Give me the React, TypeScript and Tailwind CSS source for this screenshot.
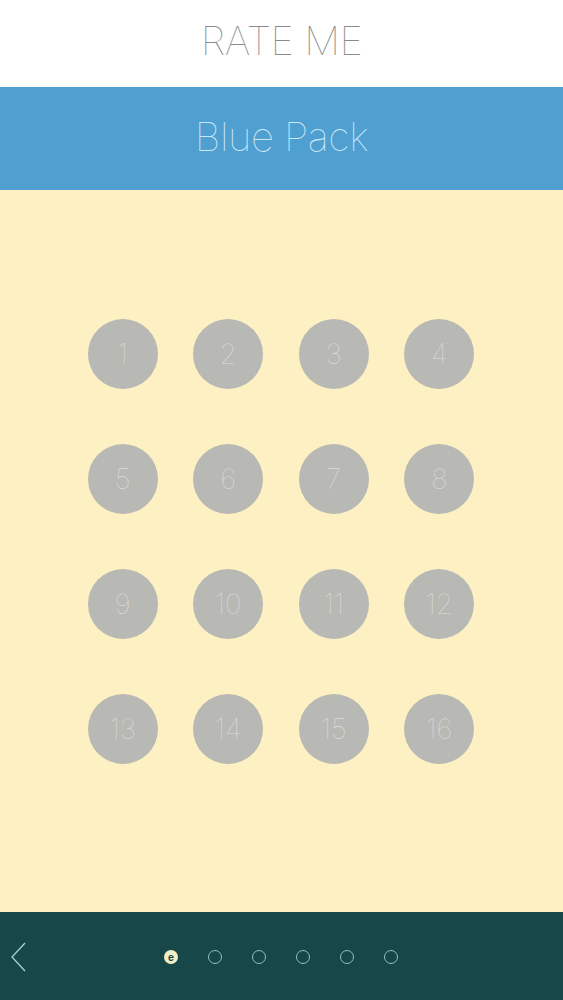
import React from 'react';

const levels = Array.from({ length: 16 }, (_, i) => i + 1);
const pages = [0, 1, 2, 3, 4, 5];

const App: React.FC = () => {
  return (
    <div className="w-[563px] h-[1000px] flex flex-col bg-[#fdf0c3]" style={{ fontFamily: 'Inter, "Liberation Sans", sans-serif' }}>
      <header className="h-[87px] bg-white flex items-center justify-center">
        <h1 className="text-[40px] font-thin tracking-[-0.5px] text-[#8a8a8a] leading-none mt-[-6px]">RATE ME</h1>
      </header>
      <div className="h-[103px] bg-[#4f9fd0] flex items-center justify-center">
        <h2 className="text-[40px] font-thin tracking-[-0.5px] text-[#cbe8fa] leading-none mt-[-4px]">Blue Pack</h2>
      </div>
      <main className="flex-1 flex justify-center pt-[129px]">
        <div className="grid grid-cols-4 gap-x-[35.5px] gap-y-[55px] h-fit ml-[-1px]">
          {levels.map(n => (
            <button
              key={n}
              className="w-[70px] h-[70px] rounded-full bg-[#b8b8b4] flex items-center justify-center text-[28px] font-thin text-[#dcdcd8]"
            >
              {n}
            </button>
          ))}
        </div>
      </main>
      <footer className="h-[88px] bg-[#18474a] relative flex items-center justify-center">
        <button className="absolute left-[10px] top-[30px]">
          <svg width="18" height="30" viewBox="0 0 18 30" fill="none" stroke="#a9d2cf" strokeWidth="1.3">
            <path d="M15 1 L2 15 L15 29" />
          </svg>
        </button>
        <div className="flex items-center gap-[30px] ml-[-1px] mt-[2px]">
          {pages.map(p =>
            p === 0 ? (
              <span key={p} className="w-[14px] h-[14px] rounded-full bg-[#f2efc6] flex items-center justify-center text-[10px] font-bold text-[#18474a] leading-none">
                e
              </span>
            ) : (
              <span key={p} className="w-[14px] h-[14px] rounded-full border-[1.3px] border-[#8cc2c0]" />
            )
          )}
        </div>
      </footer>
    </div>
  );
};

export default App;
